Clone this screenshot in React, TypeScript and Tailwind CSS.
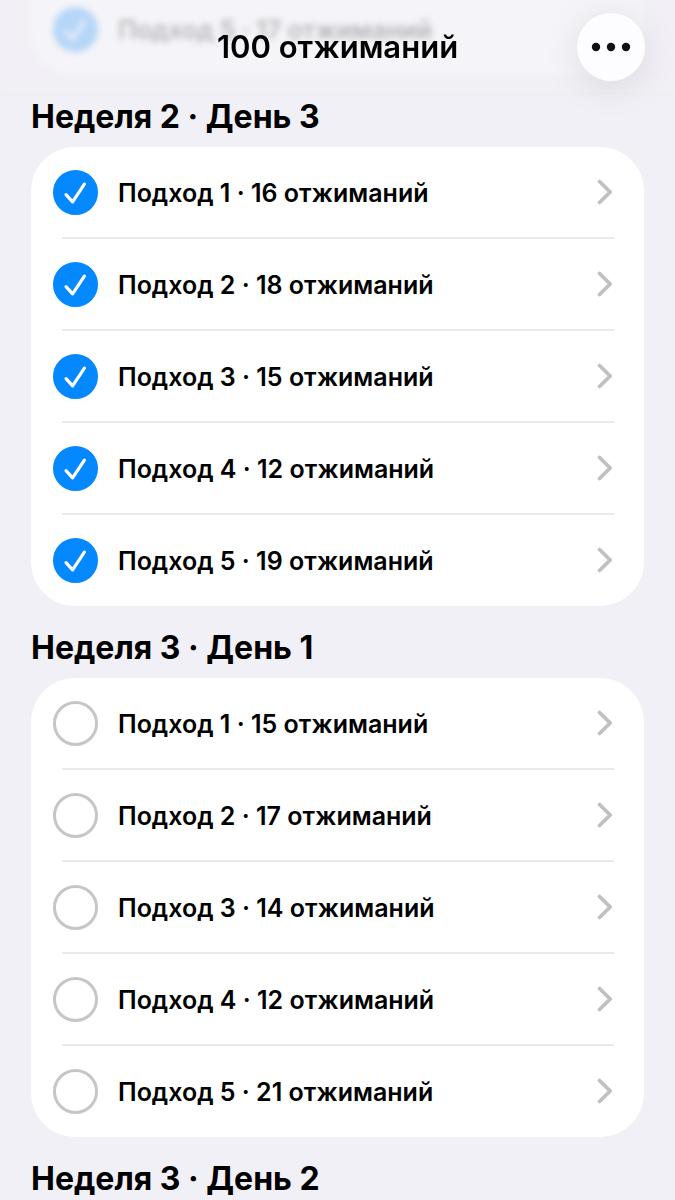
import { useState } from "react";

interface Day {
  title: string;
  reps:  { set: number; count: number }[];
  done:  boolean;
}

const makeReps = (counts: number[], first = 1) =>
  counts.map((count, i) => ({ set: first + i, count }));

const DAYS: Day[] = [
  { title: "",                  reps: makeReps([17], 5),                done: true },
  { title: "Неделя 2 · День 3", reps: makeReps([16, 18, 15, 12, 19]), done: true },
  { title: "Неделя 3 · День 1", reps: makeReps([15, 17, 14, 12, 21]), done: false },
  { title: "Неделя 3 · День 2", reps: [],                               done: false },
];

function SetRow({ id, text, initial }: { id: string; text: string; initial: boolean }) {
  const [checked, setChecked] = useState(initial);

  return (
    <div className="flex h-[90px] items-center pl-[22px] pr-[31px]">
      <span className="relative h-[45px] w-[45px] shrink-0">
        <input
          id={id}
          type="checkbox"
          checked={checked}
          onChange={e => setChecked(e.target.checked)}
          className="block h-[45px] w-[45px] appearance-none rounded-full border-[3px] border-[#c6c6c8] checked:border-[#0488ff] checked:bg-[#0488ff]"
        />
        {checked && (
          <svg viewBox="0 0 45 45" className="pointer-events-none absolute inset-0" fill="none" stroke="#fff" strokeWidth="3.2" strokeLinecap="round" strokeLinejoin="round">
            <path d="M13 24.6 L19.6 31.8 L31.4 14.2" />
          </svg>
        )}
      </span>
      <label htmlFor={id} className="min-w-0 flex-1 truncate pt-0.5 pl-5 text-[25px] leading-9 font-semibold">
        {text}
      </label>
      <a href={`#${id}`} aria-label={text} className="shrink-0">
        <svg width="18" height="28" viewBox="0 0 18 28" fill="none" stroke="#c0c0c2" strokeWidth="3.8" strokeLinecap="round" strokeLinejoin="round">
          <path d="M4.5 3.5 L15.2 14 L4.5 24.5" />
        </svg>
      </a>
    </div>
  );
}

export default function App() {
  return (
    <div className="relative h-screen overflow-hidden bg-[#f1f0f6] font-['Inter','Noto_Sans',sans-serif] text-black">

      {/* Top bar */}
      <header className="absolute inset-x-0 top-0 z-10 h-[96px]">
        <div className="absolute inset-0 bg-[#f1f0f6]/75 mask-b-from-80% backdrop-blur-[3px]" />
        <div className="relative grid h-[93px] grid-cols-[1fr_auto_1fr] items-center px-[30px]">
          <h1 className="col-start-2 text-[31px] leading-10 font-semibold">100 отжиманий</h1>
          <button
            type="button"
            aria-label="Ещё"
            className="flex h-[68px] w-[68px] items-center justify-center justify-self-end rounded-full bg-[#fdfdff] shadow-[0_6px_36px_rgba(0,0,0,0.10)]"
          >
            <svg width="40" height="10" viewBox="0 0 40 10" fill="#111">
              <circle cx="5" cy="5" r="4.2" />
              <circle cx="20" cy="5" r="4.2" />
              <circle cx="35" cy="5" r="4.2" />
            </svg>
          </button>
        </div>
      </header>

      {/* Workout days */}
      <main className="-mt-4 px-[31px]">
        {DAYS.map((day, d) => (
          <section key={d}>
            {day.title && (
              <h2 className="flex h-[72px] items-center pt-3 text-[32px] leading-10 font-bold">{day.title}</h2>
            )}
            {day.reps.length > 0 && (
              <ul className={`bg-white pb-px ${day.title ? "rounded-[44px]" : "rounded-b-[44px]"}`}>
                {day.reps.map((r, i) => (
                  <li key={r.set}>
                    {i > 0 && <div className="mr-[30px] ml-[31px] h-0.5 bg-[#e9e9eb]" />}
                    <SetRow
                      id={`day-${d}-set-${r.set}`}
                      text={`Подход ${r.set} · ${r.count} отжиманий`}
                      initial={day.done}
                    />
                  </li>
                ))}
              </ul>
            )}
          </section>
        ))}
      </main>
    </div>
  );
}
